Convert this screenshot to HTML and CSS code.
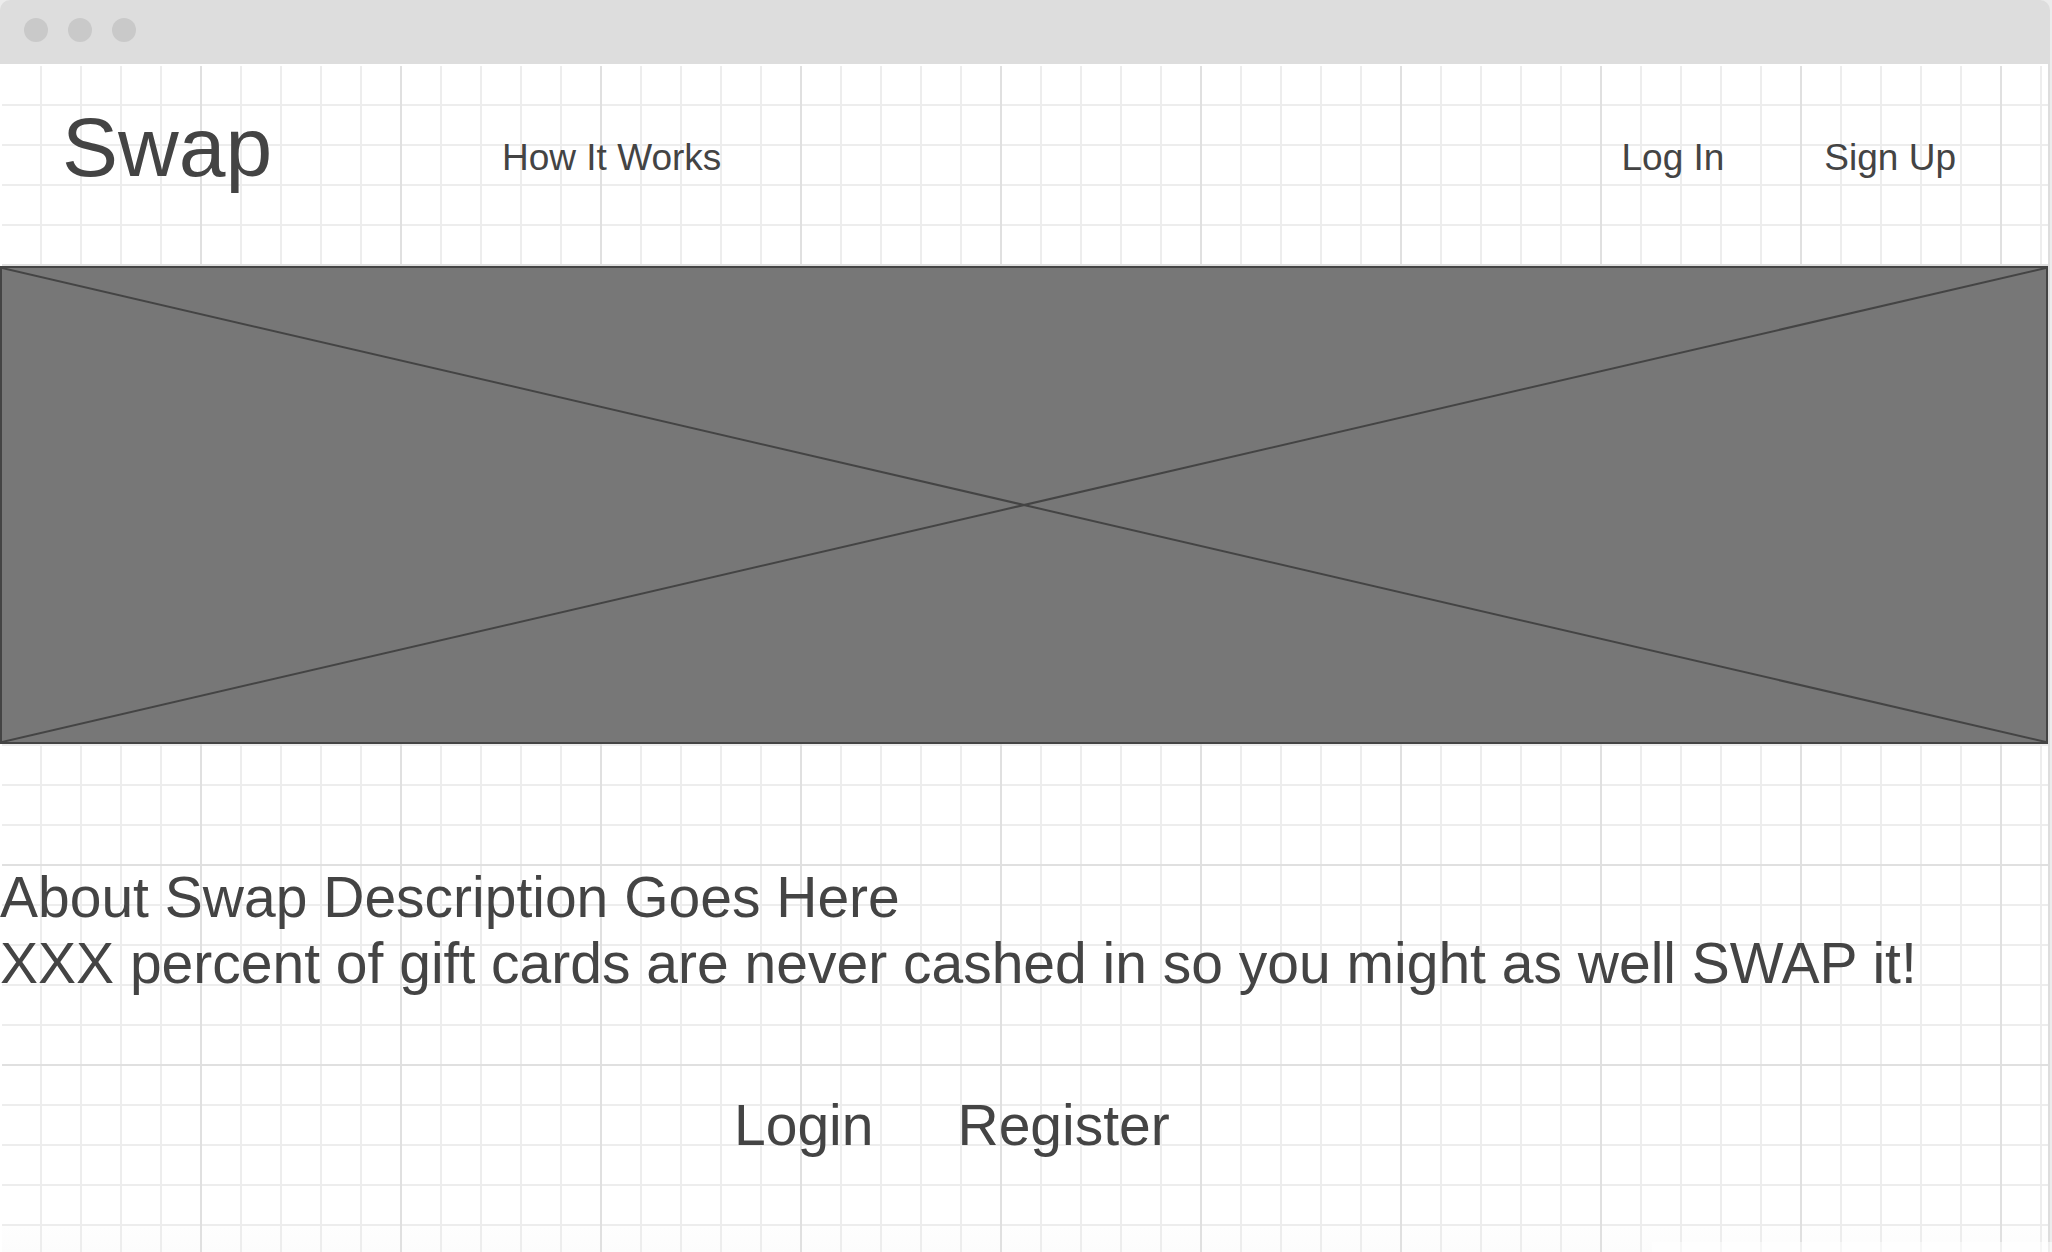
FILE: index.html
```html
<!DOCTYPE html>
<html lang="en">
<head>
<meta charset="utf-8">
<meta name="viewport" content="width=device-width, initial-scale=1">
<title>Swap</title>
<link rel="stylesheet" href="styles.css">
</head>
<body>
<div class="window">
  <div class="titlebar">
    <span class="dot"></span>
    <span class="dot"></span>
    <span class="dot"></span>
  </div>
  <div class="canvas">
    <header class="header">
      <h1 class="brand">Swap</h1>
      <nav class="nav">
        <a class="nav-link" href="#how">How It Works</a>
        <div class="account">
          <a class="nav-link" href="#login">Log In</a>
          <a class="nav-link" href="#signup">Sign Up</a>
        </div>
      </nav>
    </header>
    <main>
      <svg class="hero" role="img" aria-label="Image placeholder">
        <line x1="0" y1="0" x2="100%" y2="100%"/>
        <line x1="0" y1="100%" x2="100%" y2="0"/>
      </svg>
      <section class="about">
        <p>About Swap Description Goes Here</p>
        <p>XXX percent of gift cards are never cashed in so you might as well SWAP it!</p>
      </section>
      <div class="actions">
        <a class="action" href="#login">Login</a>
        <a class="action" href="#register">Register</a>
      </div>
    </main>
  </div>
</div>
</body>
</html>
```

FILE: styles.css
```css
* {
  box-sizing: border-box;
}

body {
  margin: 0;
  background: #ececec;
  color: #444;
  font-family: "Liberation Sans", Arial, sans-serif;
}

.window {
  position: relative;
  display: flex;
  flex-direction: column;
  min-height: 100vh;
  margin-right: 2px;
}

/* Pale strip over the lower right edge */
.window::after {
  content: "";
  position: absolute;
  right: -2px;
  bottom: 0;
  width: 400px;
  height: 10px;
  background: rgba(255, 255, 255, 0.5);
}

.titlebar {
  display: flex;
  align-items: center;
  gap: 20px;
  height: 64px;
  padding: 0 24px 4px;
  border-radius: 10px 10px 0 0;
  background: #ddd;
}

.dot {
  width: 24px;
  height: 24px;
  border-radius: 50%;
  background: #c9c9c9;
}

/* Graph paper: a minor line every 40px, a major one every 200px */
.canvas {
  flex: 1;
  border-right: 2px solid #ddd;
  background-color: #fff;
  background-image:
    linear-gradient(#fff, #fff),
    linear-gradient(#fff, #fff),
    linear-gradient(#e0e0e0 2px, transparent 2px),
    linear-gradient(90deg, #e0e0e0 2px, transparent 2px),
    linear-gradient(#ededed 2px, transparent 2px),
    linear-gradient(90deg, #ededed 2px, transparent 2px),
    linear-gradient(#fefefe, #fcfcfc);
  background-position: 0 0, 0 0, 0 0, 0 0, 0 0, 0 0, 0 100%;
  background-size: 100% 2px, 2px 100%, 200px 200px, 200px 200px, 40px 40px, 40px 40px, 100% 26px;
  background-repeat: no-repeat, no-repeat, repeat, repeat, repeat, repeat, no-repeat;
}

.header {
  display: flex;
  align-items: flex-start;
  height: 202px;
  padding: 35px 92px 0 62px;
}

.brand {
  flex: 0 0 440px;
  margin: 0;
  font-size: 84px;
  line-height: 96px;
  font-weight: 400;
}

.nav {
  flex: 1;
  display: flex;
  justify-content: space-between;
  padding-top: 38px;
}

.account {
  display: flex;
  gap: 100px;
}

.nav-link,
.action {
  color: inherit;
  text-decoration: none;
}

.nav-link {
  font-size: 37px;
  line-height: 42px;
}

.hero {
  display: block;
  width: 100%;
  height: 478px;
  border: 2px solid #444;
  background: #777;
  stroke: #444;
  stroke-width: 2px;
}

.about {
  padding-top: 120px;
  font-size: 57px;
  line-height: 66px;
}

.about p {
  margin: 0;
}

.actions {
  display: flex;
  gap: 84px;
  padding: 96px 0 80px 734px;
}

.action {
  font-size: 57px;
  line-height: 66px;
}
```
